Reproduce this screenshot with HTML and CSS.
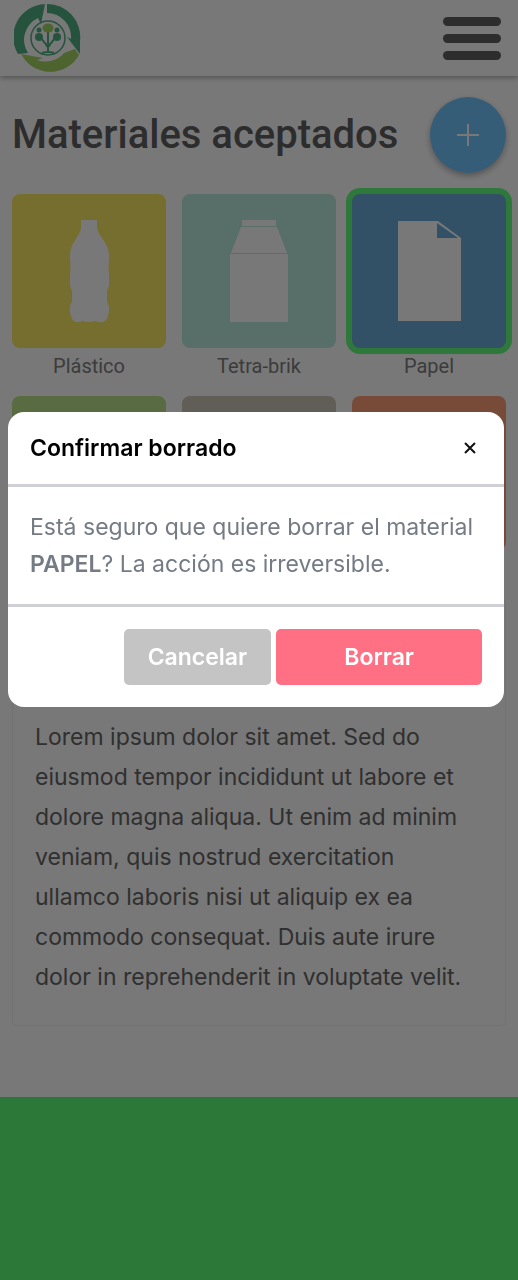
FILE: index.html
```html
<!DOCTYPE html>
<html lang="es">
<head>
<meta charset="utf-8">
<meta name="viewport" content="width=device-width, initial-scale=1">
<title>Materiales aceptados</title>
<link rel="stylesheet" href="styles.css">
</head>
<body>
<div class="page">
  <header class="topbar">
    <a class="logo" href="#" aria-label="Inicio">
      <svg viewBox="0 0 68 68" width="68" height="68" aria-hidden="true">
        <g class="fill-dark">
          <path d="M31 0A33 33 0 0 0 4 50L14 49A24 24 0 0 1 24 14L27 20Z"/>
          <path d="M33 0A33 33 0 0 1 66 37L66 50L53 33L57 35A24 24 0 0 0 33 9Z"/>
        </g>
        <path class="fill-light" d="M7 50L29 54L23 56A24 24 0 0 0 50 49L61 45L65 51A33 33 0 0 1 11 56Z"/>
        <circle class="seal" cx="34" cy="34" r="17"/>
        <path class="trunk" d="M34 48V28M33 43C33 38 27 38 26 31M35 43C35 38 41 38 42 31M28 49Q34 47 40 49"/>
        <g class="fill-dark"><circle cx="25" cy="33" r="4"/><circle cx="43" cy="33" r="4"/><circle cx="25" cy="26" r="2.500"/><circle cx="43" cy="26" r="2.500"/></g>
        <ellipse class="fill-light" cx="34" cy="24" rx="5.500" ry="4.500"/>
      </svg>
    </a>
    <button class="menu" type="button" aria-label="Menú"><span></span><span></span><span></span></button>
  </header>
  <main class="content">
    <div class="heading">
      <h1>Materiales aceptados</h1>
      <button class="add" type="button" aria-label="Añadir material">
        <svg viewBox="0 0 22 22" width="22" height="22" aria-hidden="true"><path d="M11 0V22M0 11H22"/></svg>
      </button>
    </div>
    <ul class="materials">
      <li>
        <button class="tile plastic" type="button" aria-labelledby="m1">
          <svg viewBox="0 0 154 154" aria-hidden="true"><path d="M69 26H85V34C86 42 97 49 97 61C97 70 96 74 97 79V90C97 95 95 94 95 98V108C98 112 97 117 96 122C94 128 91 129 86 128Q83 126 80 128H74Q71 126 68 128C63 129 60 127 59 122C57 117 57 112 60 108V98C60 94 58 95 58 90V79C59 74 58 70 58 61C58 49 68 42 69 34Z"/></svg>
        </button>
        <span class="name" id="m1">Plástico</span>
      </li>
      <li>
        <button class="tile brik" type="button" aria-labelledby="m2">
          <svg viewBox="0 0 154 154" aria-hidden="true"><path d="M60 26H94V32H60ZM59 33H95L105 59H49ZM48 60H106V128H48Z"/></svg>
        </button>
        <span class="name" id="m2">Tetra-brik</span>
      </li>
      <li>
        <button class="tile paper selected" type="button" aria-labelledby="m3" aria-pressed="true">
          <svg viewBox="0 0 154 154" aria-hidden="true"><path fill-rule="evenodd" d="M46 27H86L109 44V127H46ZM85 29V44H106Z"/></svg>
        </button>
        <span class="name" id="m3">Papel</span>
      </li>
      <li><span class="tile glass"></span></li>
      <li><span class="tile cardboard"></span></li>
      <li><span class="tile metal"></span></li>
    </ul>
    <article class="card">
      <p>Lorem ipsum dolor sit amet. Sed do eiusmod tempor incididunt ut labore et dolore magna aliqua. Ut enim ad minim veniam, quis nostrud exercitation ullamco laboris nisi ut aliquip ex ea commodo consequat. Duis aute irure dolor in reprehenderit in voluptate velit.</p>
    </article>
  </main>
  <footer class="footer"></footer>
</div>
<div class="backdrop">
  <section class="modal" role="dialog" aria-modal="true" aria-labelledby="title">
    <header class="modal-head">
      <h2 id="title">Confirmar borrado</h2>
      <button class="close" type="button" aria-label="Cerrar"><svg viewBox="0 0 12 12" width="12" height="12" aria-hidden="true"><path d="M1 1L11 11M11 1L1 11"/></svg></button>
    </header>
    <p class="modal-body">Está seguro que quiere borrar el material <strong>PAPEL</strong>? La acción es irreversible.</p>
    <div class="actions">
      <button class="btn cancel" type="button">Cancelar</button>
      <button class="btn delete" type="button">Borrar</button>
    </div>
  </section>
</div>
</body>
</html>
```
FILE: styles.css
```css
* { box-sizing: border-box; }
body { margin: 0; background: #fff; font-family: Inter, sans-serif; }
button { border: 0; padding: 0; font: inherit; cursor: pointer; }
h1, h2, p, ul { margin: 0; padding: 0; }
.page { min-height: 100vh; display: flex; flex-direction: column; }

.topbar { display: flex; align-items: center; justify-content: space-between; height: 76px; padding: 0 17px 0 14px; box-shadow: 0 2px 5px rgba(0, 0, 0, .3); }
.logo, .logo svg { display: block; }
.fill-dark { fill: #4fb083; }
.fill-light { fill: #a6d465; }
.seal { fill: none; stroke: #4fb083; stroke-width: 1.5; }
.trunk { fill: none; stroke: #4fb083; stroke-width: 2; }
.menu { display: flex; flex-direction: column; gap: 8px; background: none; }
.menu span { width: 58px; height: 9px; border-radius: 5px; background: #606060; }

.content { padding: 21px 12px 71px; }
.heading { display: flex; align-items: center; justify-content: space-between; margin-bottom: 21px; }
.heading h1 { font: 500 40px/48px Roboto, sans-serif; color: #606060; }
.add { display: grid; place-items: center; width: 76px; height: 76px; border-radius: 50%; background: #73c6ff; box-shadow: 0 3px 6px rgba(0, 0, 0, .3); }
.add svg { stroke: #fff; stroke-width: 2; }

.materials { display: grid; grid-template-columns: repeat(3, 1fr); gap: 12px 16px; list-style: none; }
.materials li { display: flex; flex-direction: column; }
.tile { display: block; aspect-ratio: 1; border-radius: 8px; }
.tile svg { display: block; width: 100%; fill: #fff; }
.plastic { background: #f9ea62; }
.brik { background: #bbeadd; }
.paper { background: #6aaad9; }
.glass { background: #bde488; }
.cardboard { background: #cec6b9; }
.metal { background: #ffa077; }
.selected { box-shadow: 0 0 0 6px #64ff80; }
.name { padding: 2px 0 1px; font: 400 20px/33px Roboto, sans-serif; text-align: center; color: #808080; }

.card { margin-top: 49px; padding: 117px 22px 28px; border: 1px solid #f0f0f0; border-radius: 4px; }
.card p { font-size: 23px; line-height: 40px; color: #666; }
.footer { flex: 1; min-height: 183px; background: #5eff77; }

.backdrop { position: fixed; inset: 0; padding: 412px 14px 0 8px; background: rgba(0, 0, 0, .53); }
.modal { overflow: hidden; border-radius: 16px; background: #fff; }
.modal-head { display: flex; align-items: center; justify-content: space-between; padding: 18px 28px 18px 22px; border-bottom: 3px solid #d0d1d6; }
.modal-head h2 { font-size: 23px; line-height: 36px; font-weight: 600; color: #000; }
.close { display: grid; background: none; }
.close svg { stroke: #111; stroke-width: 2; }
.modal-body { padding: 22px 22px 21px; border-bottom: 3px solid #d0d1d6; font-size: 23px; line-height: 37px; color: #757b85; }
.modal-body strong { font-weight: 600; }
.actions { display: flex; justify-content: flex-end; gap: 5px; padding: 22px; }
.btn { height: 56px; padding: 0 24px; border-radius: 5px; font-size: 23px; font-weight: 600; color: #fff; }
.cancel { background: #c4c4c4; }
.delete { padding: 0 68px; background: #ff7085; }
```
